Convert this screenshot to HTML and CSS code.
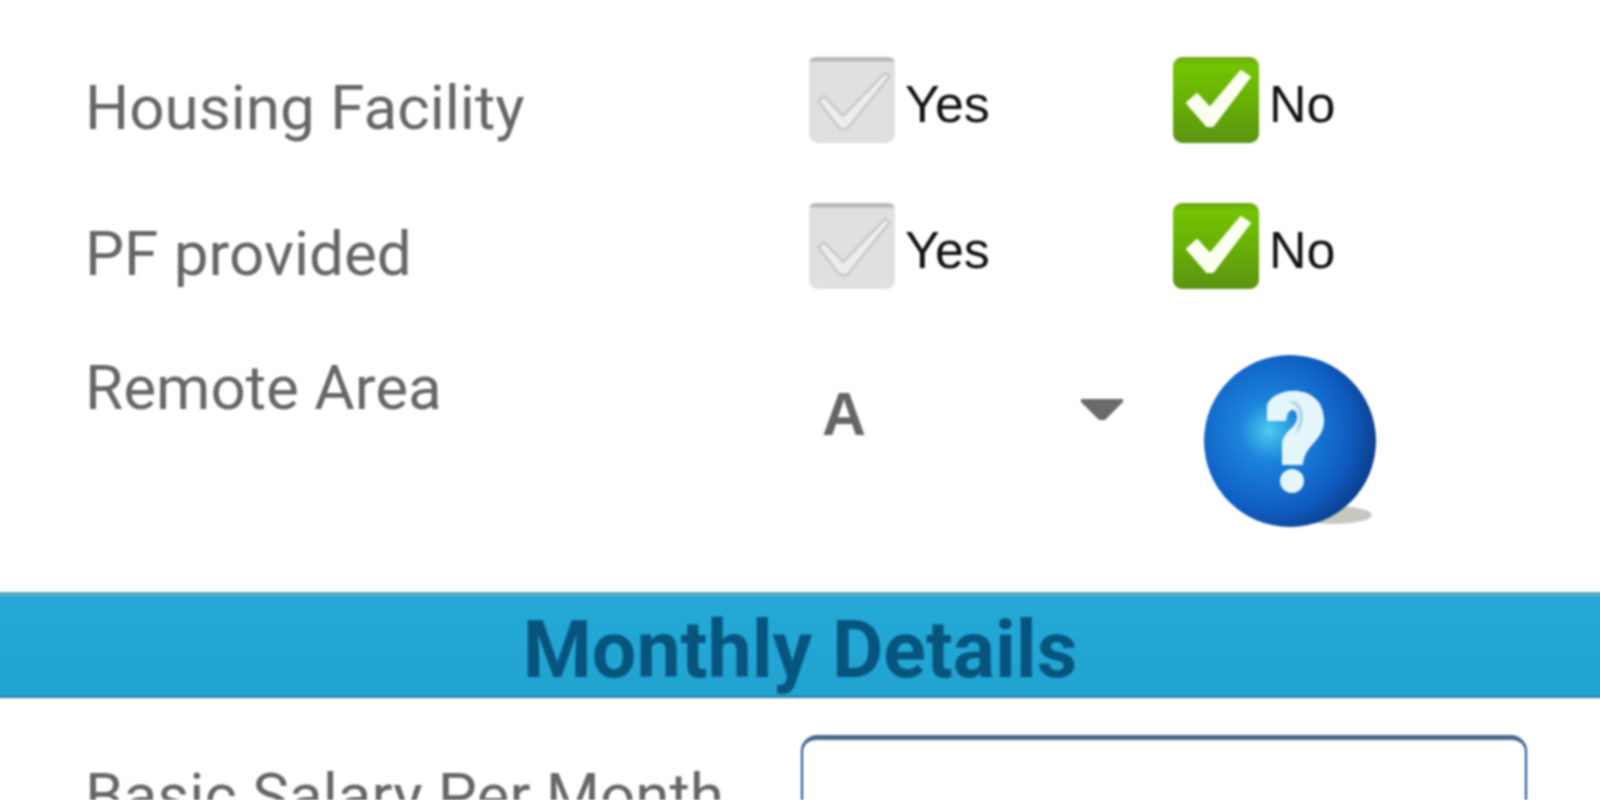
FILE: index.html
```html
<!DOCTYPE html>
<html lang="en">
<head>
<meta charset="utf-8">
<title>Monthly Details</title>
<link rel="stylesheet" href="styles.css">
</head>
<body>
<svg class="defs" width="0" height="0" aria-hidden="true">
  <defs>
    <linearGradient id="green" x1="0" y1="0" x2="0" y2="1">
      <stop offset="0" stop-color="#6fa80f"/>
      <stop offset=".1" stop-color="#74c404"/>
      <stop offset=".55" stop-color="#66ae06"/>
      <stop offset="1" stop-color="#5c9412"/>
    </linearGradient>
    <radialGradient id="ball" cx=".38" cy=".44" r=".66">
      <stop offset="0" stop-color="#4ccbee"/>
      <stop offset=".26" stop-color="#1c84dc"/>
      <stop offset=".72" stop-color="#0f5cc0"/>
      <stop offset="1" stop-color="#0a3a84"/>
    </radialGradient>
  </defs>
</svg>
<main class="form">
  <section class="rows">
    <div class="row">
      <div class="label">Housing Facility</div>
      <div class="choices">
        <div class="choice">
          <svg class="box" viewBox="0 0 86 86"><rect width="86" height="86" rx="9" fill="#e0e0e0"/><path d="M0 9a9 9 0 0 1 9-9h68a9 9 0 0 1 9 9z" fill="#b8b8b8" transform="scale(1 .5)"/><path d="M9 44l6-5 19 20L76 16l5 3-43 53h-7z" fill="#ededed" stroke="#c8c8c8" stroke-width="2.5" stroke-linejoin="round"/></svg>
          <span class="opt">Yes</span>
        </div>
        <div class="choice">
          <svg class="box" viewBox="0 0 86 86"><rect width="86" height="86" rx="9" fill="url(#green)"/><path d="M14 46l10-9 13 14L68 14l9 6-37 49h-6z" fill="#fbfff0" stroke="#fbfff0" stroke-width="2" stroke-linejoin="round"/></svg>
          <span class="opt">No</span>
        </div>
      </div>
    </div>
    <div class="row">
      <div class="label">PF provided</div>
      <div class="choices">
        <div class="choice">
          <svg class="box" viewBox="0 0 86 86"><rect width="86" height="86" rx="9" fill="#e0e0e0"/><path d="M0 9a9 9 0 0 1 9-9h68a9 9 0 0 1 9 9z" fill="#b8b8b8" transform="scale(1 .5)"/><path d="M9 44l6-5 19 20L76 16l5 3-43 53h-7z" fill="#ededed" stroke="#c8c8c8" stroke-width="2.5" stroke-linejoin="round"/></svg>
          <span class="opt">Yes</span>
        </div>
        <div class="choice">
          <svg class="box" viewBox="0 0 86 86"><rect width="86" height="86" rx="9" fill="url(#green)"/><path d="M14 46l10-9 13 14L68 14l9 6-37 49h-6z" fill="#fbfff0" stroke="#fbfff0" stroke-width="2" stroke-linejoin="round"/></svg>
          <span class="opt">No</span>
        </div>
      </div>
    </div>
    <div class="row row-remote">
      <div class="label">Remote Area</div>
      <div class="remote">
        <div class="select">
          <span class="select-value">A</span>
          <svg class="arrow" viewBox="0 0 42 21"><path d="M0 0h42v3L24 21h-6L0 3z" fill="#6a6a6a"/></svg>
        </div>
        <svg class="help" viewBox="0 0 176 176">
          <ellipse cx="130" cy="160" rx="38" ry="9" fill="#8e9080" opacity=".5"/>
          <circle cx="86" cy="86" r="86" fill="url(#ball)"/>
          <path d="M63 50c8-20 56-22 57 14 1 22-20 25-21 46H78V88c2-13 15-15 15-26 0-9-8-9-10-1l-1 5H63z" fill="#e4f6fb"/>
          <path d="M84 46c10-2 16 6 15 18-1 8-4 12-7 15 1-8 4-10 3-19-1-8-5-11-11-14z" fill="#b4d6e4"/>
          <circle cx="88" cy="126" r="12" fill="#e4f6fb"/>
        </svg>
      </div>
    </div>
  </section>
  <h2 class="banner">Monthly Details</h2>
  <section class="row row-salary">
    <div class="label">Basic Salary Per Month</div>
    <div class="field"></div>
  </section>
</main>
</body>
</html>
```
FILE: styles.css
```css
html, body {
  margin: 0;
  height: 100%;
  background: #fff;
  overflow: hidden;
}
.defs {
  position: absolute;
}
.form {
  height: 800px;
  margin: 0 -6px;
  padding: 0 6px;
  overflow: hidden;
  filter: blur(.9px);
}
.rows {
  padding: 57px 0 0 85px;
  height: 592px;
  box-sizing: border-box;
}
.row {
  display: flex;
}
.row + .row {
  margin-top: 60px;
}
.label {
  width: 724px;
  flex: none;
  font: 62px/1 Roboto, sans-serif;
  color: #666;
}
.row > .label {
  padding-top: 20px;
}
.choices {
  display: flex;
}
.choice {
  width: 364px;
  display: flex;
  align-items: flex-start;
}
.box {
  width: 86px;
  height: 86px;
  flex: none;
}
.opt {
  margin-left: 10px;
  font: 52px/1 "Liberation Sans", sans-serif;
  color: #111;
  padding-top: 21px;
}
.row > .row-remote-label {
  padding-top: 0;
}
.row-remote > .label {
  padding-top: 8px;
}
.remote {
  display: flex;
}
.select {
  width: 314px;
  box-sizing: border-box;
  padding: 35px 0 0 13px;
  display: flex;
  justify-content: space-between;
  align-items: flex-start;
}
.select-value {
  font: bold 61px/1 "Liberation Sans", sans-serif;
  color: #666;
}
.arrow {
  width: 42px;
  height: 21px;
  margin-top: 15px;
}
.help {
  width: 176px;
  height: 176px;
  margin: 6px 0 0 81px;
}
.banner {
  margin: 0 -6px;
  height: 106px;
  box-sizing: border-box;
  border-top: 4px solid #5aa7bf;
  border-bottom: 2px solid #1f7f9f;
  background: linear-gradient(#25a9d6, #21a3d0);
  color: #07557f;
  font: bold 79px/108px Roboto, sans-serif;
  text-align: center;
}
.row-salary {
  padding: 37px 0 0 85px;
}
.row-salary > .label {
  padding-top: 30px;
  width: 716px;
}
.field {
  width: 726px;
  height: 200px;
  box-sizing: border-box;
  border: 2px solid #1f4f8c;
  border-top: 5px solid #47698a;
  border-radius: 16px;
  background: #fff;
}
```
